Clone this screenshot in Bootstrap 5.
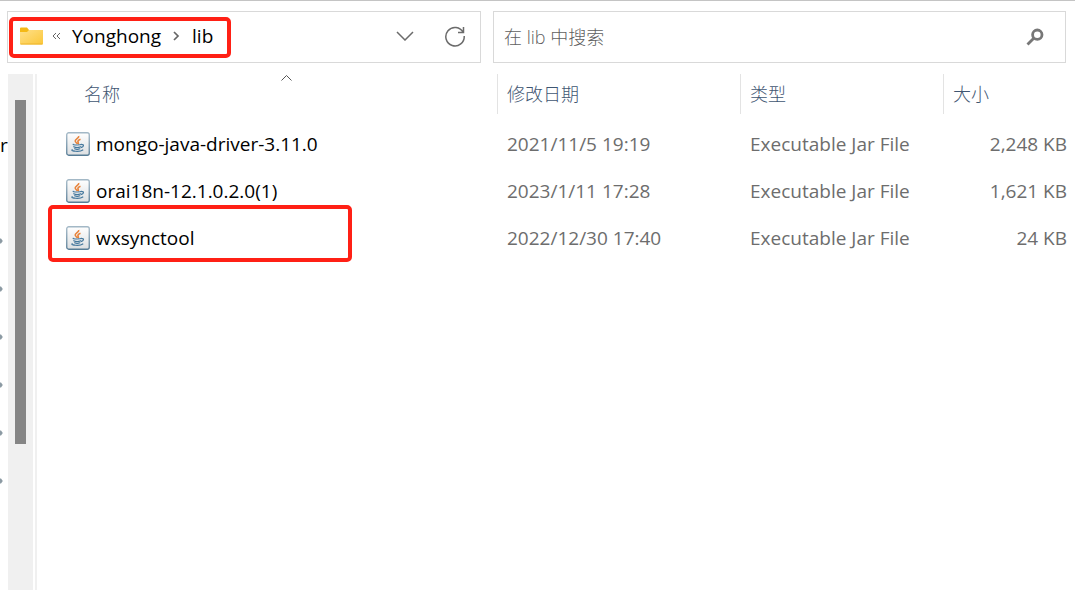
<!DOCTYPE html>
<html lang="zh-CN">
<head>
<meta charset="utf-8">
<meta name="viewport" content="width=device-width, initial-scale=1">
<title>lib</title>
<link href="https://cdn.jsdelivr.net/npm/bootstrap@5.3.0/dist/css/bootstrap.min.css" rel="stylesheet">
<style>
  body { font: 19px/24px "Open Sans", "Noto Sans CJK SC", sans-serif; color: #000; background: #fff; }
  .defs { position: absolute; width: 0; height: 0; }
  .window { border-top: 1px solid #c4c4c4; }
  .toolbar { gap: 12px; padding: 10px 9px 11px 7px; }
  .field { height: 52px; border: 1px solid #d9d9d9; }
  .address { flex: 0 1 474px; padding: 0 0 2px 12px; }
  .crumb { color: #000; text-decoration: none; }
  .crumb-more { margin: 0 11px 0 9px; }
  .crumb-sep { margin: 0 12px; }
  .tool { width: 50px; height: 50px; padding: 0; border: 0; background: none; display: grid; place-items: center; }
  .search { flex: 1 1 0; min-width: 0; padding: 0 12px 0 10px; }
  .search input { font-size: 18px; font-weight: 300; line-height: 24px; color: #6d6d6d; border: 0; outline: 0; background: none; padding: 0; min-width: 0; }
  .search input::placeholder { color: #5f5f5f; opacity: 1; }
  .search .tool { width: 36px; }
  .outline-red { position: absolute; border: 4px solid #ff2015; border-radius: 5px; pointer-events: none; }
  .address .outline-red { left: 1px; top: 5px; width: 222px; height: 41px; }
  .file-name .outline-red { left: 11px; top: -9px; width: 304px; height: 57px; }
  .tree { width: 8px; padding-top: 47px; overflow: hidden; }
  .tree li { height: 48px; display: flex; align-items: center; }
  .track { width: 25px; padding: 26px 7px 0; background: #f0f0f0; }
  .thumb { width: 11px; height: 344px; background: #858585; }
  .pane { margin-left: 2px; border-left: 2px solid #f0f0f0; min-width: 0; }
  .files { width: 100%; table-layout: fixed; border-collapse: collapse; }
  .files th { height: 46px; padding: 0; font-size: 18px; font-weight: 300; vertical-align: top; color: #3f5672; }
  .heading { height: 40px; padding-left: 9px; border-left: 1px solid #e3e3e3; display: flex; align-items: center; }
  .heading.first { padding-left: 47px; border: 0; }
  .sort { position: absolute; left: 244px; top: 0; }
  .files td { height: 47px; padding: 0 0 0 10px; color: #6d6d6d; white-space: nowrap; }
  .files td.file-name { padding-left: 29px; color: #000; }
  .file-label { display: flex; align-items: center; gap: 6px; }
  .files td.size { padding: 0 8px 0 0; text-align: right; }
  .col-date { width: 243px; } .col-type { width: 203px; } .col-size { width: 132px; }
</style>
</head>
<body>
<svg class="defs" aria-hidden="true">
  <defs>
    <linearGradient id="fold" x1="0" y1="0" x2="1" y2="1"><stop offset="0" stop-color="#ffe08a"/><stop offset="1" stop-color="#fbc739"/></linearGradient>
    <linearGradient id="plate" x1="0" y1="0" x2="0" y2="1"><stop offset="0" stop-color="#fff"/><stop offset="1" stop-color="#dcdfe1"/></linearGradient>
    <linearGradient id="rim" x1="0" y1="0" x2="0" y2="1"><stop offset="0" stop-color="#a3b8c6"/><stop offset="1" stop-color="#567c96"/></linearGradient>
    <symbol id="jar" viewBox="0 0 24 24">
      <rect x=".75" y=".75" width="22.5" height="22.5" rx="2" fill="url(#plate)" stroke="url(#rim)" stroke-width="1.3"/>
      <path d="M12.700 4c.7 2-3.700 3-3.500 5 .1 1.300 1.700 1.900 2.100 3M14.500 7.300c-2 .8-3 1.700-2.500 2.700.4.800.8 1.300.100 2.200" fill="none" stroke="#e8833a" stroke-width="1.600"/>
      <path d="M7.300 12.300c-1.200.7 7 1.100 8.300 0M7.800 14.700c1.500.8 5 .8 7 0M8.600 16.800c1.500.6 3.600.6 5.300 0M15.800 12.600c2.300-.5 2.200 1.900-.3 2.900M6.200 17.700c-2.200 1.400 7.600 2.600 10.600.3" fill="none" stroke="#44779c" stroke-width="1.200" stroke-linecap="round"/>
    </symbol>
    <symbol id="tip" viewBox="0 0 3 6"><path d="M0 .5h1L2.800 3 1 5.500H0z" fill="#8c9aa3"/></symbol>
  </defs>
</svg>
<div class="window d-flex flex-column min-vh-100">
  <header class="toolbar d-flex">
    <nav class="field address position-relative d-flex align-items-center" aria-label="路径">
      <svg width="23" height="18" viewBox="0 0 23 18" class="flex-shrink-0" aria-hidden="true"><path d="M0 1.500Q0 .5 1 .5h6l2 2.500h13q1 0 1 1V8H0z" fill="#f4b916"/><path d="M0 5h7l2-2h13q1 0 1 1v12.500q0 1-1 1H1q-1 0-1-1z" fill="url(#fold)"/><path d="M.5 17h22" stroke="#eeb52c"/></svg>
      <svg width="9" height="8" viewBox="0 0 9 8" class="flex-shrink-0 crumb-more" aria-hidden="true"><path d="M4 1 1 4l3 3M8 1 5 4l3 3" fill="none" stroke="#666"/></svg>
      <a class="crumb" href="#">Yonghong</a>
      <svg width="7" height="10" viewBox="0 0 7 10" class="flex-shrink-0 crumb-sep" aria-hidden="true"><path d="m1 1 4 4-4 4" fill="none" stroke="#666" stroke-width="1.700"/></svg>
      <a class="crumb" href="#">lib</a>
      <button class="tool ms-auto" type="button" aria-label="历史"><svg width="18" height="10" viewBox="0 0 18 10"><path d="m1 1 8 8 8-8" fill="none" stroke="#6b6b6b" stroke-width="1.500"/></svg></button>
      <button class="tool" type="button" aria-label="刷新"><svg width="22" height="22" viewBox="0 0 22 22"><path d="M19.200 7.500A9.200 9.200 0 1 0 20.200 11M19.500 2v5.500H14" fill="none" stroke="#6b6b6b" stroke-width="1.500"/></svg></button>
      <span class="outline-red"></span>
    </nav>
    <form class="field search d-flex align-items-center">
      <input class="flex-grow-1" type="text" placeholder="在 lib 中搜索" aria-label="在 lib 中搜索">
      <button class="tool" type="button" aria-label="搜索"><svg width="18" height="18" viewBox="0 0 18 18"><circle cx="11.300" cy="6.700" r="4.700" fill="none" stroke="#777" stroke-width="2.800"/><path d="m8 10-6.500 6.500" stroke="#777" stroke-width="2.800"/></svg></button>
    </form>
  </header>
  <main class="d-flex flex-grow-1">
    <ul class="tree list-unstyled mb-0 flex-shrink-0">
      <li>r</li>
      <li></li>
      <li><svg width="3" height="6"><use href="#tip"/></svg></li>
      <li><svg width="3" height="6"><use href="#tip"/></svg></li>
      <li><svg width="3" height="6"><use href="#tip"/></svg></li>
      <li><svg width="3" height="6"><use href="#tip"/></svg></li>
      <li><svg width="3" height="6"><use href="#tip"/></svg></li>
      <li><svg width="3" height="6"><use href="#tip"/></svg></li>
    </ul>
    <div class="track flex-shrink-0"><div class="thumb"></div></div>
    <section class="pane flex-grow-1">
      <table class="files">
        <colgroup><col><col class="col-date"><col class="col-type"><col class="col-size"></colgroup>
        <thead>
          <tr>
            <th scope="col" class="position-relative"><div class="heading first">名称</div><svg class="sort" width="12" height="7" viewBox="0 0 12 7" aria-hidden="true"><path d="m.5 6.500 5-5 5 5" fill="none" stroke="#555"/></svg></th>
            <th scope="col"><div class="heading">修改日期</div></th>
            <th scope="col"><div class="heading">类型</div></th>
            <th scope="col"><div class="heading">大小</div></th>
          </tr>
        </thead>
        <tbody>
          <tr>
            <td class="file-name"><div class="file-label"><svg width="24" height="24" aria-hidden="true"><use href="#jar"/></svg><span>mongo-java-driver-3.11.0</span></div></td>
            <td>2021/11/5 19:19</td><td>Executable Jar File</td><td class="size">2,248 KB</td>
          </tr>
          <tr>
            <td class="file-name"><div class="file-label"><svg width="24" height="24" aria-hidden="true"><use href="#jar"/></svg><span>orai18n-12.1.0.2.0(1)</span></div></td>
            <td>2023/1/11 17:28</td><td>Executable Jar File</td><td class="size">1,621 KB</td>
          </tr>
          <tr>
            <td class="file-name position-relative"><div class="file-label"><svg width="24" height="24" aria-hidden="true"><use href="#jar"/></svg><span>wxsynctool</span></div><span class="outline-red"></span></td>
            <td>2022/12/30 17:40</td><td>Executable Jar File</td><td class="size">24 KB</td>
          </tr>
        </tbody>
      </table>
    </section>
  </main>
</div>
<script src="https://cdn.jsdelivr.net/npm/bootstrap@5.3.0/dist/js/bootstrap.bundle.min.js"></script>
</body>
</html>
